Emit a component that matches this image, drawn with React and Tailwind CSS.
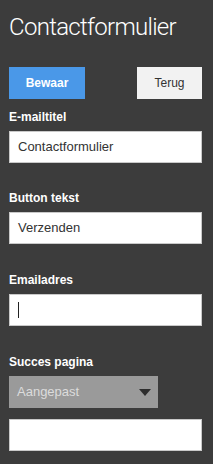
// Contact form settings panel: title, save/back actions and a stack of fields.
export default function App() {
  const label = "block text-[12px] leading-[16px] font-bold text-white";
  const field =
    "flex items-center h-[32px] w-full bg-white border border-[#c9c9c9] px-[8px] text-[13px] text-[#333]";

  return (
    <div
      className="min-h-[464px] w-[213px] bg-[#3c3c3c] pl-[9px] pr-[11px] pt-[13px]"
      style={{ fontFamily: '"Liberation Sans", Arial, sans-serif' }}
    >
      <h1
        className="text-[24px] leading-[28px] font-light tracking-[-0.7px] text-white"
        style={{ fontFamily: 'Roboto, "Liberation Sans", sans-serif' }}
      >
        Contactformulier
      </h1>

      <div className="mt-[26px] flex justify-between">
        <button className="h-[32px] w-[76px] bg-[#4a98e8] text-[12px] font-bold text-white">
          Bewaar
        </button>
        <button className="h-[32px] w-[65px] bg-[#f2f2f2] text-[12px] text-[#333]">
          Terug
        </button>
      </div>

      <label className={`${label} mt-[10px]`}>E-mailtitel</label>
      <div className={`${field} mt-[6px]`}>Contactformulier</div>

      <label className={`${label} mt-[27px]`}>Button tekst</label>
      <div className={`${field} mt-[6px]`}>Verzenden</div>

      <label className={`${label} mt-[28px]`}>Emailadres</label>
      <div className={`${field} mt-[6px] border-[#72a6ea]`}>
        <span className="h-[16px] w-[1px] bg-[#222]" />
      </div>

      <label className={`${label} mt-[28px]`}>Succes pagina</label>
      <div className="mt-[6px] flex h-[32px] w-[149px] items-center justify-between bg-[#9a9a9a] pl-[8px] pr-[7px]">
        <span className="text-[13px] text-[#dcdcdc]">Aangepast</span>
        <svg width="12" height="7" viewBox="0 0 12 7">
          <path d="M0 0H12L6 7Z" fill="#2e2e2e" />
        </svg>
      </div>

      <div className={`${field} mt-[11px]`} />
    </div>
  );
}
